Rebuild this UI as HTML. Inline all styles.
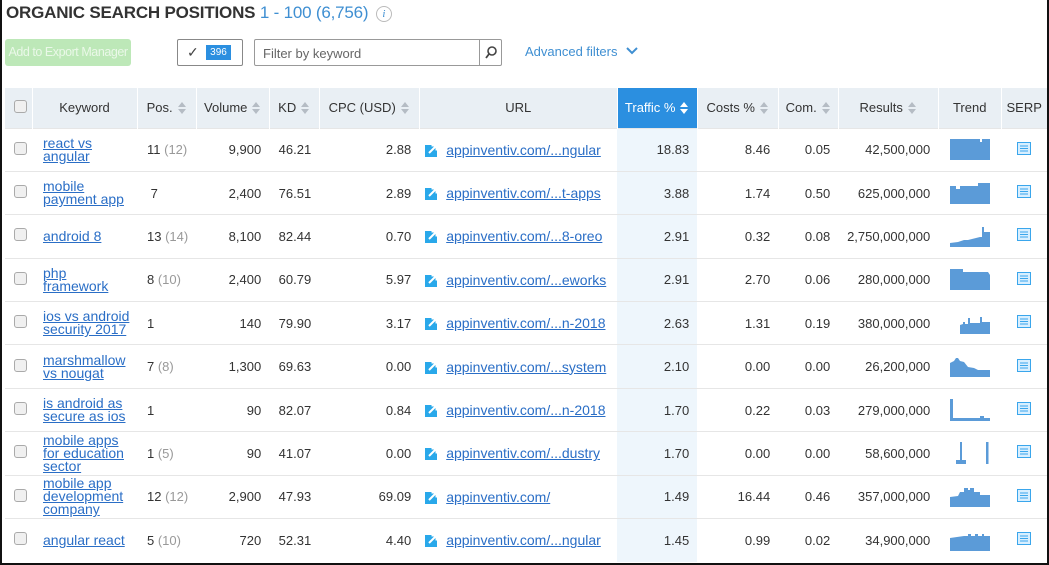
<!DOCTYPE html>
<html><head><meta charset="utf-8"><style>
*{box-sizing:border-box;margin:0;padding:0}
body{width:1049px;height:565px;background:#fff;font-family:"Liberation Sans",Arial,sans-serif;color:#333;position:relative;overflow:hidden}
.frame{position:absolute;left:0;top:0;width:1049px;height:565px;border-left:2px solid #111;border-right:2px solid #111;border-bottom:2px solid #111;pointer-events:none;z-index:5}
.title{position:absolute;left:6px;top:3px;font-size:17px;font-weight:bold;color:#333;letter-spacing:-0.2px}
.title span{font-weight:normal;color:#3f8fd2}
.info{display:inline-block;width:16px;height:16px;border:1px solid #bbb;border-radius:50%;color:#aaa;font-size:11px;font-style:italic;text-align:center;line-height:14px;vertical-align:1px;margin-left:3px;font-family:"Liberation Serif",serif}
.btn{position:absolute;left:5px;top:39px;width:126px;height:27px;background:#bde8b8;border-radius:3px;color:#eaf8e8;font-size:12.5px;letter-spacing:-0.45px;line-height:27px;text-align:center;white-space:nowrap;overflow:hidden}
.chk{position:absolute;left:177px;top:39px;width:66px;height:27px;border:1px solid #888;border-radius:2px}
.chk .v{position:absolute;left:9px;top:4px;font-size:14px;color:#444}
.chk .n{position:absolute;left:28px;top:5px;width:25px;height:15px;background:#2b8fe0;color:#fff;font-size:10px;text-align:center;line-height:15px}
.filter{position:absolute;left:254px;top:39px;width:248px;height:27px;border:1px solid #999;border-radius:2px;font-size:13px;color:#666;padding:6px 8px}
.filter .s{position:absolute;right:0;top:0;width:22px;height:25px;border-left:1px solid #999}
.adv{position:absolute;left:525px;top:44px;font-size:13px;color:#3f8fd2}
table{position:absolute;left:5px;top:88px;border-collapse:collapse;table-layout:fixed;font-size:13px}
th{height:40px;background:#e9eff4;font-weight:normal;color:#333;border-right:1px solid #fff;text-align:center;white-space:nowrap}
th.act{background:#2b8fe0;color:#fff}
td{height:43.4px;border-top:1px solid #e6e6e6;padding:0 8px;white-space:nowrap;text-align:right}
td.tr{background:#eef6fc}
.ar{display:inline-block;vertical-align:middle;margin-left:5px;width:9px;height:13px;position:relative}
.ar:before{content:"";position:absolute;left:0;top:0;border:4.5px solid transparent;border-bottom:5px solid #b5bcc4;border-top:0}
.ar:after{content:"";position:absolute;left:0;top:7px;border:4.5px solid transparent;border-top:5px solid #b5bcc4;border-bottom:0}
th.act .ar:before{border-bottom-color:#fff}th.act .ar:after{border-top-color:#fff}
.cb{display:inline-block;width:13px;height:13px;border:1px solid #aaa;border-radius:3px;background:#f0f0f0;margin-left:4px}
td.kw{text-align:left;padding:0 6px 0 11px;white-space:normal;line-height:13px;font-size:14px}
a{color:#2a6ec6;text-decoration:underline}
td.pos{text-align:left;padding-left:10px}
.g{color:#999}
td.url{text-align:left;padding-left:6px;font-size:14px}
.ext{display:inline-block;width:14px;height:14px;vertical-align:-2px;margin-right:7px}
td.c{text-align:center;padding:0}
</style></head><body>
<div class="frame"></div>
<div class="title">ORGANIC SEARCH POSITIONS <span>1 - 100 (6,756)</span> <span class="info">i</span></div>
<div class="btn">Add to Export Manager</div>
<div class="chk"><span class="v">✓</span><span class="n">396</span></div>
<div class="filter">Filter by keyword<div class="s"><svg width="22" height="25"><circle cx="12" cy="11" r="4" fill="none" stroke="#444" stroke-width="1.6"/><line x1="9" y1="14" x2="6" y2="18" stroke="#444" stroke-width="1.8"/></svg></div></div>
<div class="adv">Advanced filters <svg width="12" height="10" style="margin-left:5px"><path d="M1 2 L6 7 L11 2" fill="none" stroke="#3f8fd2" stroke-width="2"/></svg></div>
<table>
<colgroup><col style="width:27px"><col style="width:105px"><col style="width:58px"><col style="width:73px"><col style="width:50px"><col style="width:100px"><col style="width:198px"><col style="width:80px"><col style="width:81px"><col style="width:60px"><col style="width:100px"><col style="width:63px"><col style="width:46px"></colgroup>
<tr><th><span class="cb"></span></th><th>Keyword</th><th>Pos.<span class="ar"></span></th><th>Volume<span class="ar"></span></th><th>KD<span class="ar"></span></th><th>CPC (USD)<span class="ar"></span></th><th>URL</th><th class="act">Traffic %<span class="ar"></span></th><th>Costs %<span class="ar"></span></th><th>Com.<span class="ar"></span></th><th>Results<span class="ar"></span></th><th>Trend</th><th>SERP</th></tr>
<tr><td class="c"><span class="cb"></span></td><td class="kw"><a>react vs angular</a></td><td class="pos">11 <span class="g">(12)</span></td><td>9,900</td><td>46.21</td><td>2.88</td><td class="url"><svg class="ext" viewBox="0 0 14 14"><rect x="0" y="2" width="12" height="12" fill="#29a8ea"/><path d="M4 10 L11 3 M6.5 2.5 H11.5 V7.5" stroke="#fff" stroke-width="2" fill="none"/></svg><a>appinventiv.com/...ngular</a></td><td class="tr">18.83</td><td>8.46</td><td>0.05</td><td>42,500,000</td><td class="c"><svg width="40" height="24"><polygon fill="#5b9bd8" points="0,24 0,3 30,3 30,6 32,6 32,3 40,3 40,24"/></svg></td><td class="c"><svg width="14" height="13"><rect x=".5" y=".5" width="13" height="12" fill="#d8efff" stroke="#3aa6ec"/><path d="M3 4H11M3 6.5H11M3 9H11" stroke="#3aa6ec"/></svg></td></tr>
<tr><td class="c"><span class="cb"></span></td><td class="kw"><a>mobile payment app</a></td><td class="pos">&nbsp;7</td><td>2,400</td><td>76.51</td><td>2.89</td><td class="url"><svg class="ext" viewBox="0 0 14 14"><rect x="0" y="2" width="12" height="12" fill="#29a8ea"/><path d="M4 10 L11 3 M6.5 2.5 H11.5 V7.5" stroke="#fff" stroke-width="2" fill="none"/></svg><a>appinventiv.com/...t-apps</a></td><td class="tr">3.88</td><td>1.74</td><td>0.50</td><td>625,000,000</td><td class="c"><svg width="40" height="24"><polygon fill="#5b9bd8" points="0,24 0,6 6,6 6,9 10,9 10,6 28,6 28,3 40,3 40,24"/></svg></td><td class="c"><svg width="14" height="13"><rect x=".5" y=".5" width="13" height="12" fill="#d8efff" stroke="#3aa6ec"/><path d="M3 4H11M3 6.5H11M3 9H11" stroke="#3aa6ec"/></svg></td></tr>
<tr><td class="c"><span class="cb"></span></td><td class="kw"><a>android 8</a></td><td class="pos">13 <span class="g">(14)</span></td><td>8,100</td><td>82.44</td><td>0.70</td><td class="url"><svg class="ext" viewBox="0 0 14 14"><rect x="0" y="2" width="12" height="12" fill="#29a8ea"/><path d="M4 10 L11 3 M6.5 2.5 H11.5 V7.5" stroke="#fff" stroke-width="2" fill="none"/></svg><a>appinventiv.com/...8-oreo</a></td><td class="tr">2.91</td><td>0.32</td><td>0.08</td><td>2,750,000,000</td><td class="c"><svg width="40" height="24"><polygon fill="#5b9bd8" points="0,24 0,20 8,19 14,17 18,17 22,16 26,15 30,14 32,14 32,4 34,4 34,9 40,9 40,24"/></svg></td><td class="c"><svg width="14" height="13"><rect x=".5" y=".5" width="13" height="12" fill="#d8efff" stroke="#3aa6ec"/><path d="M3 4H11M3 6.5H11M3 9H11" stroke="#3aa6ec"/></svg></td></tr>
<tr><td class="c"><span class="cb"></span></td><td class="kw"><a>php<br>framework</a></td><td class="pos">8 <span class="g">(10)</span></td><td>2,400</td><td>60.79</td><td>5.97</td><td class="url"><svg class="ext" viewBox="0 0 14 14"><rect x="0" y="2" width="12" height="12" fill="#29a8ea"/><path d="M4 10 L11 3 M6.5 2.5 H11.5 V7.5" stroke="#fff" stroke-width="2" fill="none"/></svg><a>appinventiv.com/...eworks</a></td><td class="tr">2.91</td><td>2.70</td><td>0.06</td><td>280,000,000</td><td class="c"><svg width="40" height="24"><polygon fill="#5b9bd8" points="0,24 0,3 13,3 13,6 38,6 40,9 40,24"/></svg></td><td class="c"><svg width="14" height="13"><rect x=".5" y=".5" width="13" height="12" fill="#d8efff" stroke="#3aa6ec"/><path d="M3 4H11M3 6.5H11M3 9H11" stroke="#3aa6ec"/></svg></td></tr>
<tr><td class="c"><span class="cb"></span></td><td class="kw"><a>ios vs android security 2017</a></td><td class="pos">1</td><td>140</td><td>79.90</td><td>3.17</td><td class="url"><svg class="ext" viewBox="0 0 14 14"><rect x="0" y="2" width="12" height="12" fill="#29a8ea"/><path d="M4 10 L11 3 M6.5 2.5 H11.5 V7.5" stroke="#fff" stroke-width="2" fill="none"/></svg><a>appinventiv.com/...n-2018</a></td><td class="tr">2.63</td><td>1.31</td><td>0.19</td><td>380,000,000</td><td class="c"><svg width="40" height="24"><polygon fill="#5b9bd8" points="10,24 10,15 13,14 13,12 15,12 15,14 18,14 18,8 20,8 20,13 23,13 30,13 30,7 32,7 32,12 40,12 40,24"/></svg></td><td class="c"><svg width="14" height="13"><rect x=".5" y=".5" width="13" height="12" fill="#d8efff" stroke="#3aa6ec"/><path d="M3 4H11M3 6.5H11M3 9H11" stroke="#3aa6ec"/></svg></td></tr>
<tr><td class="c"><span class="cb"></span></td><td class="kw"><a>marshmallow vs nougat</a></td><td class="pos">7 <span class="g">(8)</span></td><td>1,300</td><td>69.63</td><td>0.00</td><td class="url"><svg class="ext" viewBox="0 0 14 14"><rect x="0" y="2" width="12" height="12" fill="#29a8ea"/><path d="M4 10 L11 3 M6.5 2.5 H11.5 V7.5" stroke="#fff" stroke-width="2" fill="none"/></svg><a>appinventiv.com/...system</a></td><td class="tr">2.10</td><td>0.00</td><td>0.00</td><td>26,200,000</td><td class="c"><svg width="40" height="24"><polygon fill="#5b9bd8" points="0,24 0,10 4,8 6,5 8,5 10,8 14,9 18,14 24,15 28,17 40,17 40,24"/></svg></td><td class="c"><svg width="14" height="13"><rect x=".5" y=".5" width="13" height="12" fill="#d8efff" stroke="#3aa6ec"/><path d="M3 4H11M3 6.5H11M3 9H11" stroke="#3aa6ec"/></svg></td></tr>
<tr><td class="c"><span class="cb"></span></td><td class="kw"><a>is android as secure as ios</a></td><td class="pos">1</td><td>90</td><td>82.07</td><td>0.84</td><td class="url"><svg class="ext" viewBox="0 0 14 14"><rect x="0" y="2" width="12" height="12" fill="#29a8ea"/><path d="M4 10 L11 3 M6.5 2.5 H11.5 V7.5" stroke="#fff" stroke-width="2" fill="none"/></svg><a>appinventiv.com/...n-2018</a></td><td class="tr">1.70</td><td>0.22</td><td>0.03</td><td>279,000,000</td><td class="c"><svg width="40" height="24"><polygon fill="#5b9bd8" points="0,24 0,2 3,2 3,21 30,21 30,19 34,19 34,21 40,21 40,24"/></svg></td><td class="c"><svg width="14" height="13"><rect x=".5" y=".5" width="13" height="12" fill="#d8efff" stroke="#3aa6ec"/><path d="M3 4H11M3 6.5H11M3 9H11" stroke="#3aa6ec"/></svg></td></tr>
<tr><td class="c"><span class="cb"></span></td><td class="kw"><a>mobile apps<br>for education sector</a></td><td class="pos">1 <span class="g">(5)</span></td><td>90</td><td>41.07</td><td>0.00</td><td class="url"><svg class="ext" viewBox="0 0 14 14"><rect x="0" y="2" width="12" height="12" fill="#29a8ea"/><path d="M4 10 L11 3 M6.5 2.5 H11.5 V7.5" stroke="#fff" stroke-width="2" fill="none"/></svg><a>appinventiv.com/...dustry</a></td><td class="tr">1.70</td><td>0.00</td><td>0.00</td><td>58,600,000</td><td class="c"><svg width="40" height="24"><polygon fill="#5b9bd8" points="6,24 6,20 10,20 10,2 12,2 12,20 16,20 16,24"/><rect x="36" y="2" width="2.5" height="22" fill="#5b9bd8"/></svg></td><td class="c"><svg width="14" height="13"><rect x=".5" y=".5" width="13" height="12" fill="#d8efff" stroke="#3aa6ec"/><path d="M3 4H11M3 6.5H11M3 9H11" stroke="#3aa6ec"/></svg></td></tr>
<tr><td class="c"><span class="cb"></span></td><td class="kw"><a>mobile app development company</a></td><td class="pos">12 <span class="g">(12)</span></td><td>2,900</td><td>47.93</td><td>69.09</td><td class="url"><svg class="ext" viewBox="0 0 14 14"><rect x="0" y="2" width="12" height="12" fill="#29a8ea"/><path d="M4 10 L11 3 M6.5 2.5 H11.5 V7.5" stroke="#fff" stroke-width="2" fill="none"/></svg><a>appinventiv.com/</a></td><td class="tr">1.49</td><td>16.44</td><td>0.46</td><td>357,000,000</td><td class="c"><svg width="40" height="24"><polygon fill="#5b9bd8" points="0,24 0,14 8,13 10,9 14,9 14,5 18,5 18,7 20,7 20,5 24,5 24,9 30,9 30,12 40,12 40,24"/></svg></td><td class="c"><svg width="14" height="13"><rect x=".5" y=".5" width="13" height="12" fill="#d8efff" stroke="#3aa6ec"/><path d="M3 4H11M3 6.5H11M3 9H11" stroke="#3aa6ec"/></svg></td></tr>
<tr><td class="c"><span class="cb"></span></td><td class="kw"><a>angular react</a></td><td class="pos">5 <span class="g">(10)</span></td><td>720</td><td>52.31</td><td>4.40</td><td class="url"><svg class="ext" viewBox="0 0 14 14"><rect x="0" y="2" width="12" height="12" fill="#29a8ea"/><path d="M4 10 L11 3 M6.5 2.5 H11.5 V7.5" stroke="#fff" stroke-width="2" fill="none"/></svg><a>appinventiv.com/...ngular</a></td><td class="tr">1.45</td><td>0.99</td><td>0.02</td><td>34,900,000</td><td class="c"><svg width="40" height="24"><polygon fill="#5b9bd8" points="0,24 0,11 14,9 18,9 18,7 21,7 21,9 25,9 25,7 28,7 28,9 32,9 32,7 34,7 34,9 40,9 40,24"/></svg></td><td class="c"><svg width="14" height="13"><rect x=".5" y=".5" width="13" height="12" fill="#d8efff" stroke="#3aa6ec"/><path d="M3 4H11M3 6.5H11M3 9H11" stroke="#3aa6ec"/></svg></td></tr>
</table>
</body></html>
